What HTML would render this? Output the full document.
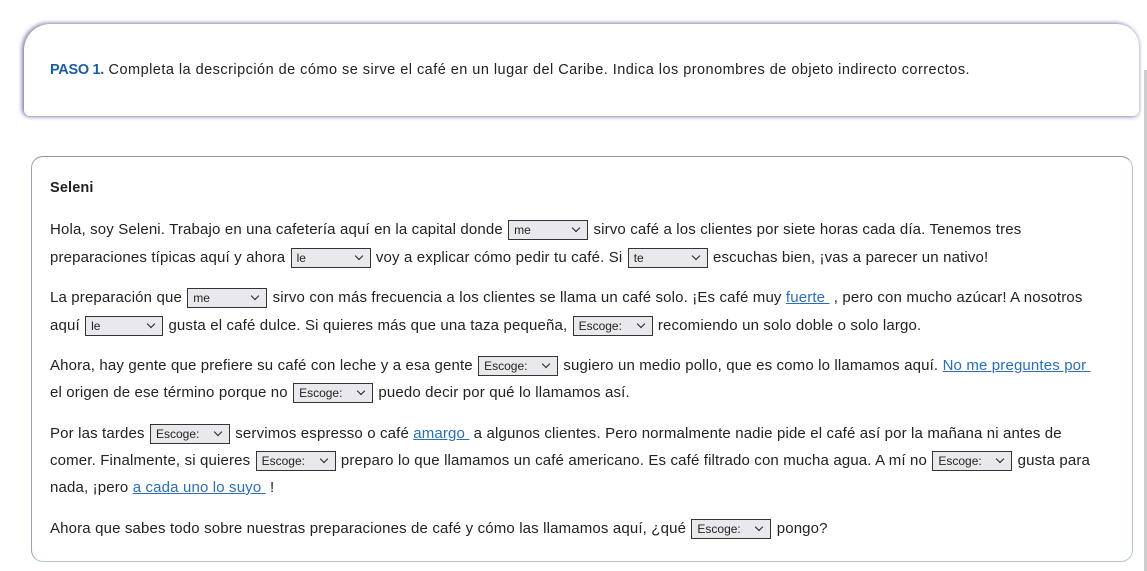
<!DOCTYPE html>
<html><head><meta charset="utf-8"><style>
html,body{margin:0;padding:0;background:#fff;width:1147px;height:571px;overflow:hidden;font-family:"Liberation Sans",sans-serif;color:#222;}
.top{position:absolute;left:24px;top:24px;width:1115px;height:92px;border-radius:26px 22px 6px 6px;box-shadow:-2px -1px 4px rgba(80,80,130,.6),0 1px 4px rgba(80,80,130,.5);background:#fff;}
.top p{position:absolute;left:26px;top:38px;margin:0;font-size:14.5px;letter-spacing:0.47px;white-space:nowrap}
.top b{color:#1a5ea8;letter-spacing:-0.3px}
.card{position:absolute;left:31px;top:156px;width:1100px;height:404px;border:1px solid #b8c4d6;border-top-color:#8a97a8;border-left-color:#9aa4b2;border-radius:12px;}
.sb{position:absolute;left:1144px;top:70px;width:3px;height:501px;background:#ccc}
.line{position:absolute;left:50px;font-size:15px;white-space:nowrap;letter-spacing:0.15px;}
.s{display:inline-block;box-sizing:border-box;width:80px;height:20px;border:1px solid #333;background:#e9e9ed;font-size:12px;line-height:18px;padding-left:5px;vertical-align:middle;position:relative;letter-spacing:0;margin:0 1px}
.s:after{content:"";position:absolute;right:8px;top:4px;width:5px;height:5px;border-right:1.5px solid #222;border-bottom:1.5px solid #222;transform:rotate(45deg)}
a{color:#2a6ebb;text-decoration:underline}
</style></head><body>
<div class="top"><p><b>PASO 1.</b> Completa la descripción de cómo se sirve el café en un lugar del Caribe. Indica los pronombres de objeto indirecto correctos.</p></div>
<div class="card"></div>
<div class="sb"></div>
<div class="line" style="top:180px;font-weight:bold;font-size:14.5px">Seleni</div>
<div class="line" style="top:220px">Hola, soy Seleni. Trabajo en una cafetería aquí en la capital donde <span class="s">me</span> sirvo café a los clientes por siete horas cada día. Tenemos tres</div>
<div class="line" style="top:248px">preparaciones típicas aquí y ahora <span class="s">le</span> voy a explicar cómo pedir tu café. Si <span class="s">te</span> escuchas bien, ¡vas a parecer un nativo!</div>
<div class="line" style="top:288px">La preparación que <span class="s">me</span> sirvo con más frecuencia a los clientes se llama un café solo. ¡Es café muy <a>fuerte&nbsp;</a> , pero con mucho azúcar! A nosotros</div>
<div class="line" style="top:316px">aquí <span class="s" style="width:78px">le</span> gusta el café dulce. Si quieres más que una taza pequeña, <span class="s">Escoge:</span> recomiendo un solo doble o solo largo.</div>
<div class="line" style="top:356px">Ahora, hay gente que prefiere su café con leche y a esa gente <span class="s">Escoge:</span> sugiero un medio pollo, que es como lo llamamos aquí. <a>No me preguntes por&nbsp;</a></div>
<div class="line" style="top:383px">el origen de ese término porque no <span class="s">Escoge:</span> puedo decir por qué lo llamamos así.</div>
<div class="line" style="top:424px">Por las tardes <span class="s">Escoge:</span> servimos espresso o café <a>amargo&nbsp;</a> a algunos clientes. Pero normalmente nadie pide el café así por la mañana ni antes de</div>
<div class="line" style="top:451px">comer. Finalmente, si quieres <span class="s">Escoge:</span> preparo lo que llamamos un café americano. Es café filtrado con mucha agua. A mí no <span class="s">Escoge:</span> gusta para</div>
<div class="line" style="top:479px">nada, ¡pero <a>a cada uno lo suyo&nbsp;</a> !</div>
<div class="line" style="top:519px">Ahora que sabes todo sobre nuestras preparaciones de café y cómo las llamamos aquí, ¿qué <span class="s">Escoge:</span> pongo?</div>
</body></html>
